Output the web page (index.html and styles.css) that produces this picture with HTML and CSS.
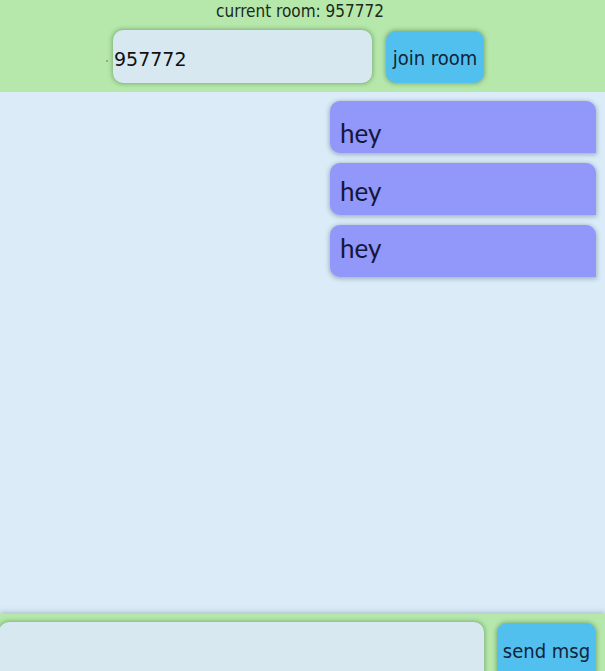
FILE: index.html
```html
<!DOCTYPE html>
<html>
<head>
<meta charset="utf-8">
<link rel="stylesheet" href="styles.css">
</head>
<body>
<div class="app">
  <header class="top">
    <div class="room-label">current room: 957772</div>
    <div class="join-row">
      <span class="mark"></span>
      <input class="room-input" type="text" value="957772">
      <button class="btn join">join room</button>
    </div>
  </header>
  <main class="chat">
    <div class="msg msg-first">hey</div>
    <div class="msg msg-second">hey</div>
    <div class="msg msg-third">hey</div>
  </main>
  <footer class="bottom">
    <input class="msg-input" type="text">
    <button class="btn send">send msg</button>
  </footer>
</div>
</body>
</html>
```
FILE: styles.css
```css
html, body {
  margin: 0;
  padding: 0;
  height: 100%;
  overflow: hidden;
}
body {
  background: #dbecf8;
  font-family: "DejaVu Sans Condensed", sans-serif;
}
.app {
  display: flex;
  flex-direction: column;
  height: 671px;
}
.top {
  background: #b6e8ab;
  height: 92px;
  display: flex;
  flex-direction: column;
  align-items: center;
  flex-shrink: 0;
}
.room-label {
  font-family: "DejaVu Sans Condensed", sans-serif;
  font-weight: 300;
  font-size: 17px;
  color: #1b2a1b;
  line-height: 22px;
  margin-left: -5px;
}
.join-row {
  display: flex;
  align-items: center;
  margin-top: 8px;
  margin-right: 15px;
}
.mark {
  width: 2px;
  height: 2px;
  background: #9aa59a;
  margin-right: 5px;
  margin-top: 8px;
}
.room-input {
  width: 259px;
  height: 53px;
  box-sizing: border-box;
  border: none;
  border-radius: 10px;
  background: #d8e8f0;
  box-shadow: 0 0 4px 1px rgba(80, 130, 80, 0.55);
  font-family: "DejaVu Sans", sans-serif;
  font-size: 19px;
  color: #111;
  padding: 4px 0 0 1px;
  outline: none;
}
.btn {
  border: none;
  border-radius: 10px;
  background: #52c0ef;
  box-shadow: 0 0 4px 1px rgba(80, 130, 80, 0.55);
  font-family: "DejaVu Sans Condensed", sans-serif;
  color: #13233a;
  padding: 0;
}
.join {
  width: 98px;
  height: 52px;
  margin-left: 14px;
  font-size: 20px;
  padding-top: 2px;
}
.chat {
  flex: 1;
  display: flex;
  flex-direction: column;
  align-items: flex-end;
  gap: 10px;
  padding: 9px 9px 0 0;
  box-sizing: border-box;
}
.msg {
  width: 266px;
  height: 52px;
  box-sizing: border-box;
  background: #9198fa;
  border-radius: 10px 10px 0 10px;
  box-shadow: 0 1px 4px 1px rgba(90, 110, 140, 0.45);
  font-family: Lato, sans-serif;
  font-size: 26px;
  color: #15173a;
  padding: 18px 0 0 10px;
  line-height: 28px;
}
.msg-second {
  padding-top: 14px;
}
.msg-third {
  padding-top: 9px;
}
.bottom {
  background: #b6e8ab;
  height: 57px;
  flex-shrink: 0;
  display: flex;
  align-items: flex-start;
  padding-top: 8px;
  box-sizing: border-box;
  box-shadow: 0 -2px 5px rgba(90, 110, 130, 0.35);
  overflow: hidden;
}
.msg-input {
  width: 485px;
  height: 60px;
  margin-left: -1px;
  box-sizing: border-box;
  border: none;
  border-radius: 10px;
  background: #d8e8f0;
  box-shadow: 0 0 4px 1px rgba(80, 130, 80, 0.55);
  outline: none;
}
.send {
  width: 99px;
  height: 60px;
  margin-left: 13px;
  margin-top: 1px;
  font-size: 20px;
  padding-bottom: 4px;
  box-sizing: border-box;
}
```
